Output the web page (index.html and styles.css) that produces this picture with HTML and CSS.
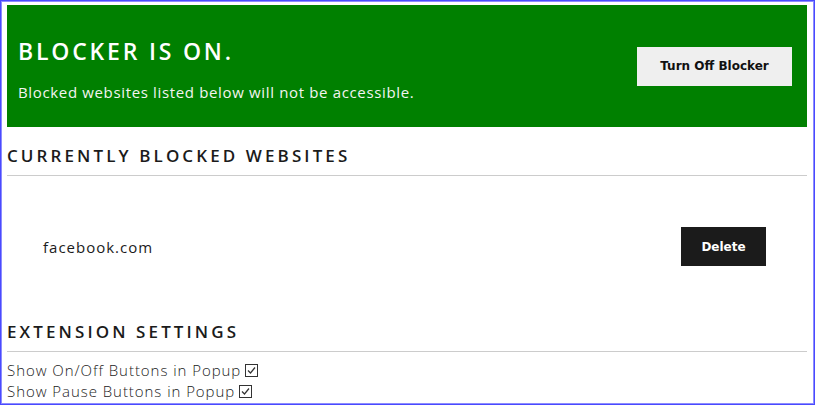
FILE: index.html
```html
<!DOCTYPE html>
<html>
<head>
<meta charset="utf-8">
<title>Blocker Options</title>
<link rel="stylesheet" href="styles.css">
</head>
<body>
<div class="frame">
  <header class="banner">
    <div class="banner-text">
      <h1 class="banner-title">BLOCKER IS ON.</h1>
      <p class="banner-sub">Blocked websites listed below will not be accessible.</p>
    </div>
    <button class="btn btn-light">Turn Off Blocker</button>
  </header>

  <section class="section">
    <h2 class="section-title">CURRENTLY BLOCKED WEBSITES</h2>
    <ul class="site-list">
      <li class="site-row">
        <span class="site-name">facebook.com</span>
        <button class="btn btn-dark">Delete</button>
      </li>
    </ul>
  </section>

  <section class="section">
    <h2 class="section-title">EXTENSION SETTINGS</h2>
    <div class="settings">
      <label class="setting">Show On/Off Buttons in Popup<svg class="check" width="13" height="13" viewBox="0 0 13 13"><rect x="0.5" y="0.5" width="12" height="12" fill="#fff" stroke="#333"/><path d="M3 6.5 L5.5 9 L10 3.5" fill="none" stroke="#333" stroke-width="1.2"/></svg></label>
      <label class="setting">Show Pause Buttons in Popup<svg class="check" width="13" height="13" viewBox="0 0 13 13"><rect x="0.5" y="0.5" width="12" height="12" fill="#fff" stroke="#333"/><path d="M3 6.5 L5.5 9 L10 3.5" fill="none" stroke="#333" stroke-width="1.2"/></svg></label>
    </div>
  </section>
</div>
</body>
</html>
```

FILE: styles.css
```css
* { box-sizing: border-box; }
html, body { margin: 0; padding: 0; background: #fff; }
body { font-family: "Open Sans", "Noto Sans", sans-serif; color: #1b1b1b; }

.frame {
  width: 815px;
  height: 405px;
  border: 1px solid #4a4aff;
  box-shadow: inset 0 0 0 1px #8c8cff;
  padding: 4px 7px 0 6px;
  overflow: hidden;
}

.banner {
  background: #008000;
  height: 122px;
  display: flex;
  align-items: center;
  justify-content: space-between;
  padding: 0 15px 0 11px;
  color: #fff;
}
.banner-text { padding-top: 6px; }
.banner-title {
  margin: 0;
  font-size: 23px;
  font-weight: 600;
  letter-spacing: 2.8px;
  line-height: 28px;
}
.banner-sub {
  margin: 17px 0 0;
  font-size: 15px;
  line-height: 20px;
  letter-spacing: 0.65px;
  color: #f4f4f0;
}

.btn {
  border: none;
  font-family: "DejaVu Sans", Verdana, sans-serif;
  font-weight: bold;
  font-size: 12px;
  height: 39px;
  cursor: pointer;
}
.btn-light { background: #efefef; color: #111; width: 155px; }
.btn-dark { background: #1b1b1b; color: #fff; width: 85px; }

.section-title {
  margin: 0;
  font-size: 17px;
  font-weight: 600;
  letter-spacing: 3.1px;
  line-height: 24px;
  padding: 17px 0 7px;
  border-bottom: 1px solid #cccccc;
}

.site-list { list-style: none; margin: 0; padding: 0; }
.site-row {
  display: flex;
  align-items: center;
  justify-content: space-between;
  padding: 51px 41px 37px 36px;
}
.site-name { font-size: 15px; letter-spacing: 1px; }

.settings { padding-top: 8px; }
.setting {
  display: flex;
  align-items: center;
  gap: 4px;
  font-size: 15px;
  line-height: 21px;
  font-weight: 300;
  letter-spacing: 0.95px;
}
.check { display: block; }
```
